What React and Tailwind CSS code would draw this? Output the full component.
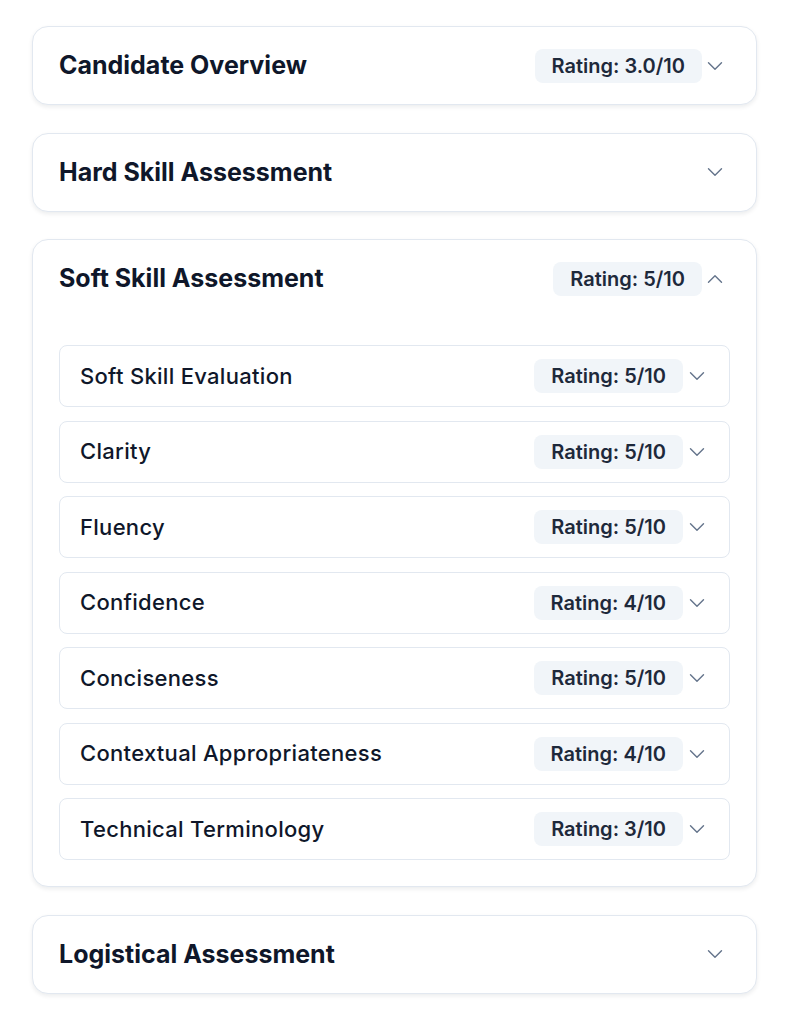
import { ChevronDown, ChevronUp } from "lucide-react";

const softSkills = [
  { name: "Soft Skill Evaluation", rating: "5/10" },
  { name: "Clarity", rating: "5/10" },
  { name: "Fluency", rating: "5/10" },
  { name: "Confidence", rating: "4/10" },
  { name: "Conciseness", rating: "5/10" },
  { name: "Contextual Appropriateness", rating: "4/10" },
  { name: "Technical Terminology", rating: "3/10" },
];

function Badge({ children }) {
  return (
    <span className="h-[34px] px-[17px] rounded-lg bg-[#f1f5f9] text-[#1e293b] text-[20px] font-semibold leading-none flex items-center">
      {children}
    </span>
  );
}

function Section({ title, rating, open, children }) {
  return (
    <div className="rounded-2xl border border-[#e2e8f0] bg-white shadow-[0_2px_4px_rgba(15,23,42,0.08)]">
      <div className="flex items-center justify-between h-[77px] pl-[26px] pr-[28px]">
        <h2 className="text-[25px] font-bold text-[#0f172a] pt-[1px]">{title}</h2>
        <div className="flex items-center">
          {rating && <Badge>Rating: {rating}</Badge>}
          {open ? (
            <ChevronUp className="w-[26px] h-[26px] text-[#64748b]" strokeWidth={1.3} />
          ) : (
            <ChevronDown className="w-[26px] h-[26px] text-[#64748b]" strokeWidth={1.3} />
          )}
        </div>
      </div>
      {open && <div className="px-[26px] pt-[28px] pb-[26px] flex flex-col gap-[13.5px]">{children}</div>}
    </div>
  );
}

function SubItem({ name, rating }) {
  return (
    <div className="rounded-lg border border-[#e2e8f0] bg-white h-[62px] flex items-center justify-between pl-[20px] pr-[19px]">
      <span className="text-[22px] font-medium text-[#0f172a] tracking-[0.3px]">{name}</span>
      <div className="flex items-center gap-[1px]">
        <Badge>Rating: {rating}</Badge>
        <ChevronDown className="w-[26px] h-[26px] text-[#64748b]" strokeWidth={1.3} />
      </div>
    </div>
  );
}

export default function App() {
  return (
    <div className="min-h-screen bg-white font-['Inter',sans-serif] px-[32px] pt-[26px] pb-[28px] flex flex-col gap-[27.5px]">
      <Section title="Candidate Overview" rating="3.0/10" />
      <Section title="Hard Skill Assessment" />
      <Section title="Soft Skill Assessment" rating="5/10" open>
        {softSkills.map((s) => (
          <SubItem key={s.name} name={s.name} rating={s.rating} />
        ))}
      </Section>
      <Section title="Logistical Assessment" />
    </div>
  );
}
